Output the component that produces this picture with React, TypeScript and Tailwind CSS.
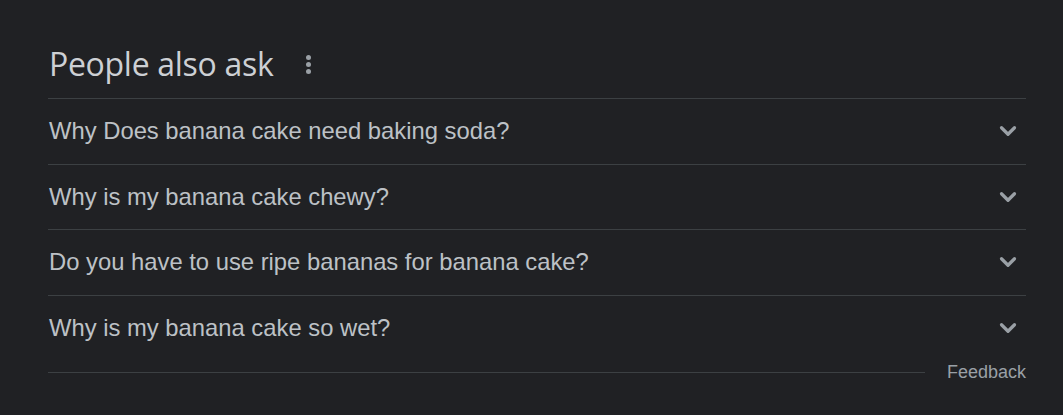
import { ChevronDown } from "lucide-react";

const questions = [
  "Why Does banana cake need baking soda?",
  "Why is my banana cake chewy?",
  "Do you have to use ripe bananas for banana cake?",
  "Why is my banana cake so wet?",
];

const App = () => {
  return (
    <div className="w-full min-h-[415px] bg-[#202124] pt-[37px] font-['Liberation_Sans',Arial,sans-serif]">
      <div className="ml-[48px] w-[978px]">
        <div className="flex items-center h-[61px] pb-[7px]">
          <h2 className="text-[32px] leading-none text-[#cdd0d4] font-['Open_Sans',Roboto,sans-serif] tracking-[-0.3px] pl-[1px]">
            People also ask
          </h2>
          <button className="ml-[33px] flex flex-col items-center gap-[2px]">
            <span className="w-[5px] h-[5px] rounded-full bg-[#9aa0a6]" />
            <span className="w-[5px] h-[5px] rounded-full bg-[#9aa0a6]" />
            <span className="w-[5px] h-[5px] rounded-full bg-[#9aa0a6]" />
          </button>
        </div>

        <div className="border-t border-[#3c4043]">
          {questions.map((q) => (
            <div
              key={q}
              className="flex items-center justify-between h-[65.5px] border-b border-[#3c4043] last:border-b-0"
            >
              <span className="text-[23.8px] text-[#bdc1c6] pl-[1px]">{q}</span>
              <ChevronDown className="w-[26px] h-[26px] mr-[5px] text-[#9aa0a6]" strokeWidth={3} />
            </div>
          ))}
        </div>

        <div className="flex items-center h-[22px]">
          <div className="flex-1 border-t border-[#3c4043]" />
          <span className="ml-[22px] text-[18px] leading-none text-[#9aa0a6]">Feedback</span>
        </div>
      </div>
    </div>
  );
};

export default App;
